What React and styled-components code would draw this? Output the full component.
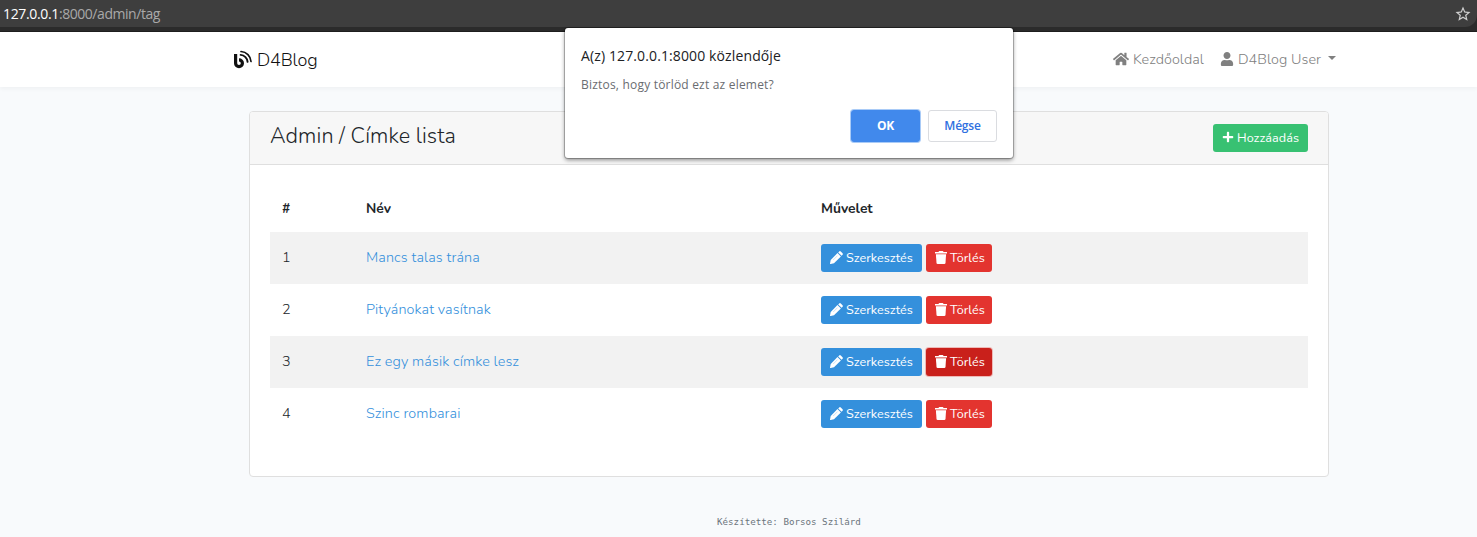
import React from "react";
import styled, { createGlobalStyle } from "styled-components";
import { FaHome, FaUser, FaPlus } from "react-icons/fa";
import { MdStarBorder } from "react-icons/md";

const GlobalStyle = createGlobalStyle`
  *, *::before, *::after { box-sizing: border-box; }
  body {
    margin: 0;
    background: #f8fafc;
    color: #212529;
    font-family: Nunito, "Open Sans", "Noto Sans", sans-serif;
    font-size: 14.4px;
    line-height: 1.6;
    overflow: hidden;
  }
  svg { display: block; flex: none; }
`;

const Page = styled.div`
  position: relative;
  height: 537px;
  overflow: hidden;
`;

const BrowserBar = styled.div`
  height: 32px;
  background: #2b2b2b;
  border-bottom: 1px solid #1f1f1f;
`;

const AddressField = styled.div`
  height: 27px;
  display: flex;
  align-items: center;
  justify-content: space-between;
  padding: 0 5px 0 3px;
  background: #3e3e3e;
  border-radius: 0 0 12px 0;
  color: #a9a9a9;
  font: 14px/27px "Open Sans", "Noto Sans", sans-serif;
`;

const Url = styled.span`
  letter-spacing: -0.45px;
  b { color: #fff; font-weight: 400; letter-spacing: -0.35px; }
`;

const Navbar = styled.nav`
  height: 55px;
  padding: 0 141px 0 233px;
  display: flex;
  align-items: center;
  justify-content: space-between;
  background: #fff;
  box-shadow: 0 2px 4px rgba(0, 0, 0, 0.04);
`;

const Brand = styled.div`
  display: flex;
  align-items: center;
  gap: 4px;
  padding-top: 1px;
  font-size: 18px;
  font-weight: 300;
  letter-spacing: -0.15px;
  color: #111;
`;

const NavLinks = styled.div`
  display: flex;
  gap: 16px;
`;

const NavLink = styled.div`
  display: flex;
  align-items: center;
  gap: 4px;
  color: #808080;
  font-size: 14.4px;
  font-weight: 300;
  letter-spacing: 0.05px;
`;

const Caret = styled.i`
  margin: -2px 0 0 3px;
  border: 4.5px solid transparent;
  border-top-color: #808080;
  border-bottom: 0;
`;

const Card = styled.section`
  width: 1080px;
  height: 366px;
  margin: 24px 0 0 249px;
  background: #fff;
  border: 1px solid #dfdfdf;
  border-radius: 4px;
`;

const CardHeader = styled.header`
  height: 53px;
  display: flex;
  align-items: center;
  justify-content: space-between;
  padding: 0 20px;
  background: #f7f7f7;
  border-bottom: 1px solid #dfdfdf;
  border-radius: 3px 3px 0 0;
`;

const Title = styled.h1`
  margin: 0;
  padding-bottom: 5px;
  font-size: 21.6px;
  line-height: 26px;
  font-weight: 300;
  letter-spacing: 0.1px;
`;

const tones = {
  green: "#38c172",
  blue: "#3490dc",
  red: "#e3342f",
  active: "#c9201b",
};

const ActionButton = styled.button`
  width: ${(p) => p.$width};
  height: 28px;
  display: flex;
  align-items: center;
  padding: 0 0 2px 9px;
  gap: 3px;
  border: 0;
  border-radius: 3px;
  background: ${(p) => tones[p.$tone]};
  box-shadow: ${(p) => (p.$tone === "active" ? "0 0 0 1px rgba(227, 52, 47, 0.3)" : "none")};
  color: #fff;
  font-family: inherit;
  font-size: 12.6px;
  letter-spacing: 0.05px;
  white-space: nowrap;
`;

const Table = styled.div`
  padding: 20px 20px 0;
`;

const Row = styled.div`
  height: 52px;
  display: grid;
  grid-template-columns: 84px 455px 1fr;
  align-items: center;
  padding: 0 12px;
  background: ${(p) => (p.$striped ? "#f2f2f2" : "transparent")};
`;

const HeadRow = styled(Row)`
  height: 47px;
  padding-top: 1px;
  font-weight: 700;
  font-size: 13.8px;
`;

const Cell = styled.span`
  font-weight: 350;
`;

const TagLink = styled.a`
  color: #3490dc;
  font-weight: 350;
  letter-spacing: 0.1px;
`;

const Actions = styled.div`
  display: flex;
  gap: 4px;
`;

const Footer = styled.footer`
  margin-top: 38px;
  padding-left: 717px;
  color: #6c757d;
  font: 9.2px/14px "DejaVu Sans Mono", "Liberation Mono", monospace;
`;

const Dialog = styled.div`
  position: absolute;
  top: 28px;
  left: 565px;
  width: 448px;
  height: 130px;
  padding: 16px;
  background: #fff;
  border-radius: 3px;
  box-shadow: 0 0 0 1px rgba(0, 0, 0, 0.22), 0 2px 4px rgba(0, 0, 0, 0.45);
  font-family: "Open Sans", "Noto Sans", sans-serif;
`;

const DialogTitle = styled.div`
  font-size: 14px;
  line-height: 24px;
  letter-spacing: 0.12px;
  color: #202124;
`;

const DialogText = styled.div`
  margin-top: 7px;
  font-size: 12px;
  line-height: 20px;
  letter-spacing: 0.2px;
  color: #6a6d71;
`;

const DialogActions = styled.div`
  display: flex;
  justify-content: flex-end;
  gap: 8px;
  margin-top: 15px;
`;

const DialogButton = styled.button`
  width: 69px;
  height: 32px;
  padding: 0 0 2px;
  border: 1px solid ${(p) => (p.$primary ? "#4189ec" : "#dadce0")};
  border-radius: 3px;
  background: ${(p) => (p.$primary ? "#4189ec" : "#fff")};
  box-shadow: ${(p) => (p.$primary ? "0 0 0 1px #a9cbf7" : "none")};
  color: ${(p) => (p.$primary ? "#fff" : "#2f70e0")};
  font-family: inherit;
  font-size: 12px;
  font-weight: ${(p) => (p.$primary ? 700 : 600)};
  letter-spacing: -0.2px;
`;

const BlogIcon = () => (
  <svg width="20" height="19" viewBox="0 0 20 19" fill="none" stroke="currentColor">
    <path d="M2.6 4v9.2a3.4 3.4 0 1 0 3.4-3.4" strokeWidth="3.2" />
    <path d="M7.6 4.9a7.4 7.4 0 0 1 7 7" strokeWidth="1.9" strokeLinecap="round" />
    <path d="M8 1.5a10.5 10.5 0 0 1 10 10" strokeWidth="1.7" strokeLinecap="round" />
  </svg>
);

const PencilIcon = () => (
  <svg width="13" height="13" viewBox="0 0 13 13" fill="currentColor">
    <path d="M7.5 2.1 10.9 5.5 4 12.3.7 13Q0 13.1 0 12.4L.7 9Z" />
    <path d="M8.2 1.4 9.2.4Q10 -.3 10.8.5L12.5 2.2Q13.3 3 12.6 3.8L11.6 4.8Z" />
    <path d="m3.2 9 4.4-4.4" stroke="#3490dc" strokeOpacity="0.45" strokeWidth="0.6" />
  </svg>
);

const TrashIcon = () => (
  <svg width="12" height="13" viewBox="0 0 12 13" fill="currentColor">
    <path d="M0 1h3.4L4 .2Q4.1 0 4.4 0h3.2q.3 0 .5.2l.5.8H12v1.6H0Z" />
    <path d="M.9 3.3h10.2l-.6 8.6q-.1 1.1-1.2 1.1H2.7q-1.1 0-1.2-1.1Z" />
  </svg>
);

const tags = [
  { id: 1, name: "Mancs talas trána" },
  { id: 2, name: "Pityánokat vasítnak" },
  { id: 3, name: "Ez egy másik címke lesz", active: true },
  { id: 4, name: "Szinc rombarai" },
];

export default function App() {
  return (
    <Page>
      <GlobalStyle />
      <BrowserBar>
        <AddressField>
          <Url><b>127.0.0.1</b>:8000/admin/tag</Url>
          <MdStarBorder size={18} color="#d0d0d0" />
        </AddressField>
      </BrowserBar>
      <Navbar>
        <Brand><BlogIcon />D4Blog</Brand>
        <NavLinks>
          <NavLink><FaHome size={16} />Kezdőoldal</NavLink>
          <NavLink><FaUser size={14} />D4Blog User<Caret /></NavLink>
        </NavLinks>
      </Navbar>
      <Card>
        <CardHeader>
          <Title>Admin / Címke lista</Title>
          <ActionButton $tone="green" $width="95px"><FaPlus size={12} />Hozzáadás</ActionButton>
        </CardHeader>
        <Table>
          <HeadRow><span>#</span><span>Név</span><span>Művelet</span></HeadRow>
          {tags.map((tag, i) => (
            <Row key={tag.id} $striped={i % 2 === 0}>
              <Cell>{tag.id}</Cell>
              <TagLink>{tag.name}</TagLink>
              <Actions>
                <ActionButton $tone="blue" $width="101px"><PencilIcon />Szerkesztés</ActionButton>
                <ActionButton $tone={tag.active ? "active" : "red"} $width="66px"><TrashIcon />Törlés</ActionButton>
              </Actions>
            </Row>
          ))}
        </Table>
      </Card>
      <Footer>Készítette: Borsos Szilárd</Footer>
      <Dialog role="dialog">
        <DialogTitle>A(z) 127.0.0.1:8000 közlendője</DialogTitle>
        <DialogText>Biztos, hogy törlöd ezt az elemet?</DialogText>
        <DialogActions>
          <DialogButton $primary>OK</DialogButton>
          <DialogButton>Mégse</DialogButton>
        </DialogActions>
      </Dialog>
    </Page>
  );
}
